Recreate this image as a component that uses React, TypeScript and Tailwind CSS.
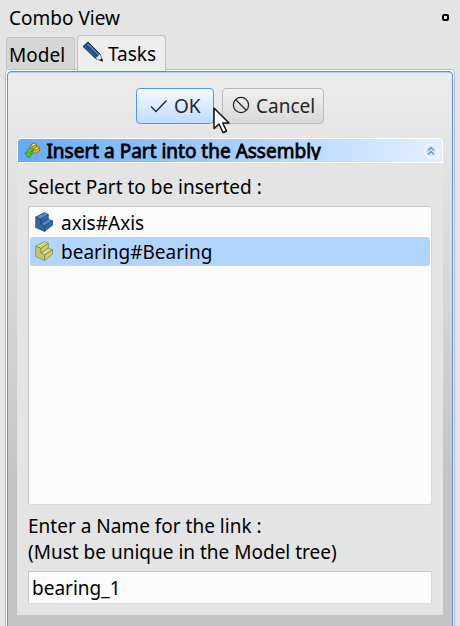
import React from "react";

function Pencil() {
  return (
    <svg width="22" height="22" viewBox="0 0 22 22" className="block shrink-0">
      <path d="M1 5.5 6 1 18 13 20.5 20 13.5 17.500Z" fill="#204a87" stroke="#0d213c" strokeWidth=".9" strokeLinejoin="round" />
      <path d="M3 5.500 14.500 16.500" stroke="#2d5c9a" strokeWidth="2" />
      <path d="M5.500 3 17 14" stroke="#5588c4" strokeWidth="1.500" />
      <path d="M13.500 17.500 18 13 20.500 20Z" fill="#e8e8e4" stroke="#888a85" strokeWidth=".6" />
      <path d="M17.500 19.200 20 17 21 20.800Z" fill="#111" />
    </svg>
  );
}

function PartIcon({ face, top, side, line }: { face: string; top: string; side: string; line: string }) {
  return (
    <svg width="18" height="20" viewBox="0 0 18 20" className="-mt-[2px] block shrink-0">
      <g stroke={line} strokeWidth=".65" strokeLinejoin="round">
        <path d="M.8 5 6 7.300 6 12 9.700 13.800 9.500 19.400.6 15.500Z" fill={face} />
        <path d="M.8 5 9.300.6 13.300 2.400 6 7.300Z" fill={top} />
        <path d="M6 7.300 13.300 2.400 13.300 7.200 6 12Z" fill={side} />
        <path d="M6 12 13.300 7.200 17.500 8.800 9.700 13.800Z" fill={top} />
        <path d="M9.700 13.800 17.500 8.800 17.500 13.200 9.500 19.400Z" fill={side} />
      </g>
    </svg>
  );
}

function InsertIcon() {
  return (
    <svg width="17" height="17" viewBox="0 0 17 17" className="block shrink-0">
      <g stroke="#806600" strokeWidth=".7" strokeLinejoin="round">
        <path d="M6 4.500 7 2.500 10 1 12.500 2.500 12.500 4.500 15.500 5.500 15.500 9 11.500 11.500 7 9Z" fill="#d9b51c" />
        <path d="M7 2.700 10 1 12.500 2.500 9 4.600Z" fill="#fce94f" />
        <path d="M9.500 7 13 4.600 15.500 5.700 12 8Z" fill="#fce94f" />
      </g>
      <path d="M9 6C5.500 5.500 2.500 7 3 11L.8 11 4.500 16 8.700 11.500 6.500 11.300C6 9.500 7.500 8.800 9.500 9Z" fill="#5fc41c" stroke="#3d7d18" strokeWidth=".8" />
    </svg>
  );
}

export default function App() {
  return (
    <div className="relative h-[626px] w-[460px] overflow-hidden bg-[#e4e4e4] font-['Noto_Sans',sans-serif] text-[19px] leading-[26px] text-black">
      <header className="flex h-[35px] items-center justify-between pl-[9px] pr-[11px]">
        <span className="whitespace-nowrap">Combo View</span>
        <span className="h-[7px] w-[7px] rounded-[2px] border-2 border-black" />
      </header>

      <nav className="flex h-[34px] items-end gap-[2px] pl-[6px]">
        <div className="h-[32px] w-[69px] rounded-t-[4px] border border-b-0 border-[#c1c1c1] bg-[#d6d6d6] pl-[2px] pt-[4px]">Model</div>
        <div className="z-10 -mb-[2px] flex h-[36px] w-[89px] rounded-t-[4px] border border-b-0 border-[#bfbfbf] bg-[#eeeeee] pl-[4px] pt-[5px]">
          <Pencil />
          <span className="ml-[4px]">Tasks</span>
        </div>
      </nav>

      <main className="ml-[5px] h-[580px] w-[450px] rounded-t-[4px] border border-[#bdbdbd] bg-white p-px">
        <div className="h-full rounded-t-[4px] border-[1px] border-[#4595f5] bg-linear-to-b from-[#ececec] via-[#d8d8d8] via-[36%] to-[#c4c4c4] to-[72%] px-[9px] pt-[16px] shadow-[inset_0_1px_#a8cffb]">
          <div className="flex gap-[8px] pl-[119px] text-[#232629]">
            <button className="flex h-[36px] w-[78px] items-center rounded-[4px] border-[1.500px] border-[#4997f6] bg-linear-to-b from-[#f7faff] to-[#c0dbff] pl-[13px]">
              <svg width="18" height="14" viewBox="0 0 18 14" fill="none" stroke="#232629" strokeWidth="1.300"><path d="m1 7.500 5 5L16.500 1.500" /></svg>
              <span className="ml-[6px]">OK</span>
            </button>
            <button className="flex h-[36px] w-[102px] items-center rounded-[4px] border border-[#bcbcbc] bg-linear-to-b from-[#f1f1f1] to-[#d9d9d9] pl-[9px]">
              <svg className="-mt-[2px]" width="18" height="18" viewBox="0 0 18 18" fill="none" stroke="#232629" strokeWidth="1.300"><circle cx="9" cy="9" r="7.600" /><path d="m3.500 3.500 11 11" /></svg>
              <span className="ml-[6px]">Cancel</span>
            </button>
          </div>

          <section className="mt-[14px] h-[477px] w-[426px] bg-[#e4e4e4]">
            <div className="flex h-[25px] items-center rounded-t-[4px] border border-white bg-linear-to-r from-[#64abff] to-[#e4f0ff] pl-[6px] pr-[4px]">
              <InsertIcon />
              <h2 className="-mt-[2px] ml-[5px] h-[21px] w-[350px] overflow-hidden whitespace-nowrap pl-[0.4px] font-normal leading-[24px] [-webkit-text-stroke:0.8px_black]">Insert a Part into the Assembly</h2>
              <svg className="ml-auto" width="14" height="14" viewBox="0 0 14 14"><circle cx="7" cy="7" r="6.300" fill="#e4e4e4" stroke="#fff" /><path d="m4 6.500 3-3 3 3m-6 4 3-3 3 3" fill="none" stroke="#4997f6" strokeWidth="1.400" /></svg>
            </div>
            <div className="px-[11px] pt-[11px]">
              <p className="whitespace-nowrap">Select Part to be inserted :</p>
              <div className="mt-[6px] h-[299px] w-[404px] rounded-[3px] border border-[#c8c8c8] border-b-[#d9d9d9] border-r-[#d9d9d9] bg-[#fcfcfc] p-px">
                <div className="flex h-[29px] items-center pl-[5px]">
                  <PartIcon face="#3465a4" top="#5389c8" side="#3466a8" line="#1b3a66" />
                  <span className="ml-[8px]">axis#Axis</span>
                </div>
                <div className="flex h-[29px] items-center rounded-[3px] bg-[#b2d5ff] pl-[5px]">
                  <PartIcon face="#c4c86c" top="#dadd7e" side="#cbd074" line="#777b42" />
                  <span className="ml-[8px]">bearing#Bearing</span>
                </div>
              </div>
              <p className="mt-[8px] whitespace-nowrap">Enter a Name for the link :<br />(Must be unique in the Model tree)</p>
              <div className="mt-[6px] h-[33px] w-[404px] border border-[#c8c8c8] border-b-[#d9d9d9] border-r-[#d9d9d9] bg-[#fcfcfc] pl-[3px] pt-[3px]">bearing_1</div>
            </div>
          </section>
        </div>
      </main>

      <svg className="absolute left-[212px] top-[106px]" width="22" height="31" viewBox="0 0 22 31">
        <path d="M2.500 2.500V24L7.500 19.500 11.500 28 15.500 26.300 11.500 18.300H18.500Z" fill="#777" opacity=".4" />
        <path d="M2 2V22.500L7 18 11 26.500 14.500 25 10.700 17H17Z" fill="#fff" stroke="#151515" strokeWidth="1.500" strokeLinejoin="round" />
      </svg>
    </div>
  );
}
